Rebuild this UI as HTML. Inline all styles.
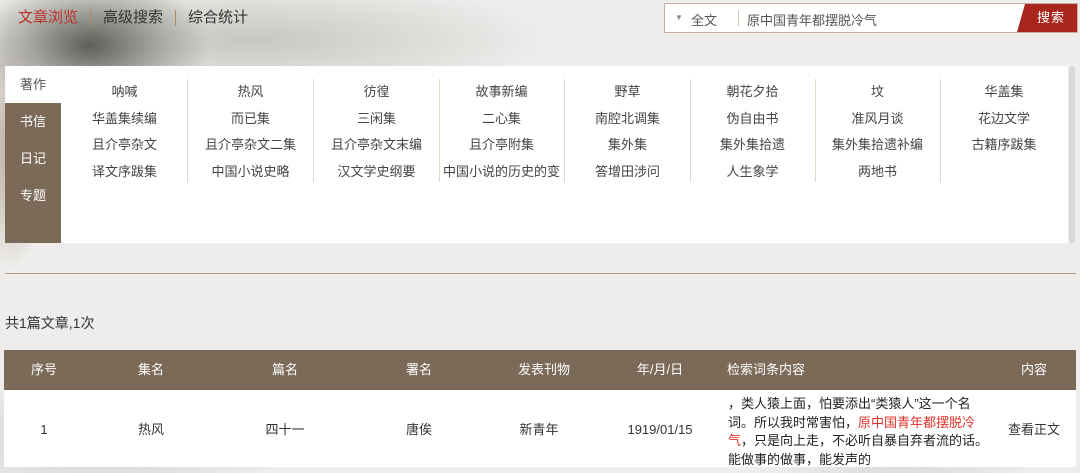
<!DOCTYPE html>
<html><head><meta charset="utf-8"><style>
*{margin:0;padding:0;box-sizing:border-box}
body{width:1080px;height:473px;overflow:hidden;font-family:"Liberation Sans","Noto Sans CJK SC",sans-serif;background:#eeedeb;position:relative;color:#333}
.bg{position:absolute;left:0;top:0;width:1080px;height:473px;background:
radial-gradient(ellipse 120px 70px at 90px 45px,rgba(60,65,55,.8),rgba(110,110,100,.4) 60%,transparent 100%),
radial-gradient(ellipse 300px 60px at 250px 40px,rgba(160,160,155,.5),transparent 100%),
radial-gradient(ellipse 40px 120px at 10px 150px,rgba(150,130,110,.6),transparent 100%),
radial-gradient(ellipse 200px 60px at 100px 440px,rgba(160,160,155,.4),transparent 100%),
radial-gradient(ellipse 140px 60px at 900px 450px,rgba(180,180,175,.4),transparent 100%)}
.nav{position:absolute;top:10px;left:18px;font-size:15px;display:flex}
.nav span{padding:0 12px;border-left:1px solid #b08a5a;line-height:16px}
.nav span:first-child{padding-left:0;border:none;color:#c0302a}
.search{position:absolute;left:664px;top:3px;width:414px;height:30px;border:1px solid #c9aea0;background:#fff;font-size:13px}
.search .tri{position:absolute;left:10px;top:9px;font-size:8px;color:#888}
.search .sel{position:absolute;left:26px;top:6px;color:#555}
.search .sep{position:absolute;left:73px;top:6px;height:16px;border-left:1px solid #d8c8b8}
.search .q{position:absolute;left:82px;top:6px;color:#555}
.search .btn{position:absolute;right:0;top:0;width:60px;height:28px;background:#a8261e;clip-path:polygon(8px 0,100% 0,100% 100%,0 100%);color:#fff;font-size:13px;text-align:center;line-height:28px;padding-left:8px;letter-spacing:1px}
.panel{position:absolute;left:5px;top:66px;width:1071px;height:177px;background:#fff}
.tabs{position:absolute;left:0;top:0;width:56px;height:177px;background:#7b6a58}
.tabs div{height:37px;line-height:37px;text-align:center;color:#fff;font-size:13px}
.tabs div.on{background:#fff;color:#555}
.col{position:absolute;top:13px;width:126px;height:103px;text-align:center;font-size:13px;color:#444;line-height:26.7px}
.col.d{border-right:1px solid #e2d8cc}
.scroll{position:absolute;right:0;top:0;width:8px;height:177px;background:#ececec}
.scroll i{position:absolute;left:1px;top:0;width:6px;height:177px;background:#d8d8d8;border-radius:3px}
.hr{position:absolute;left:5px;top:273px;width:1071px;border-top:1px solid #b79a86}
.count{position:absolute;left:5px;top:313px;font-size:14px;color:#333}
.th{position:absolute;left:4px;top:350px;width:1072px;height:40px;background:#7b6a58;color:#fff;font-size:13px}
.tr{position:absolute;left:4px;top:390px;width:1072px;height:77px;background:#fff;font-size:13px;color:#333}
.c{position:absolute;top:0;transform:translateX(-50%);white-space:nowrap}
.th .c{line-height:40px}
.tr .c{line-height:80px}
.l{position:absolute;top:0;white-space:nowrap;line-height:40px}
.txt{position:absolute;left:728px;top:395px;font-size:13px;line-height:18.5px;color:#222;white-space:nowrap}
.red{color:#e0302a}
</style></head><body>
<div class="bg"></div>
<div class="nav"><span>文章浏览</span><span>高级搜索</span><span>综合统计</span></div>
<div class="search"><span class="tri">▼</span><span class="sel">全文</span><span class="sep"></span><span class="q">原中国青年都摆脱冷气</span><div class="btn">搜索</div></div>
<div class="panel">
<div class="tabs"><div class="on">著作</div><div>书信</div><div>日记</div><div>专题</div></div>
<div class="col d" style="left:57px">呐喊<br>华盖集续编<br>且介亭杂文<br>译文序跋集</div>
<div class="col d" style="left:183px">热风<br>而已集<br>且介亭杂文二集<br>中国小说史略</div>
<div class="col d" style="left:309px">彷徨<br>三闲集<br>且介亭杂文末编<br>汉文学史纲要</div>
<div class="col d" style="left:434px">故事新编<br>二心集<br>且介亭附集<br>中国小说的历史的变</div>
<div class="col d" style="left:560px">野草<br>南腔北调集<br>集外集<br>答增田涉问</div>
<div class="col d" style="left:685px">朝花夕拾<br>伪自由书<br>集外集拾遗<br>人生象学</div>
<div class="col d" style="left:810px">坟<br>准风月谈<br>集外集拾遗补编<br>两地书</div>
<div class="col" style="left:936px">华盖集<br>花边文学<br>古籍序跋集</div>
<div class="scroll"><i></i></div>
</div>
<div class="hr"></div>
<div class="count">共1篇文章,1次</div>
<div class="th">
<span class="c" style="left:40px">序号</span><span class="c" style="left:147px">集名</span><span class="c" style="left:281px">篇名</span><span class="c" style="left:415px">署名</span><span class="c" style="left:540px">发表刊物</span><span class="c" style="left:656px">年/月/日</span><span class="l" style="left:723px">检索词条内容</span><span class="c" style="left:1030px">内容</span>
</div>
<div class="tr">
<span class="c" style="left:40px">1</span><span class="c" style="left:147px">热风</span><span class="c" style="left:281px">四十一</span><span class="c" style="left:415px">唐俟</span><span class="c" style="left:535px">新青年</span><span class="c" style="left:656px">1919/01/15</span><span class="c" style="left:1030px">查看正文</span>
</div>
<div class="txt">，类人猿上面，怕要添出“类猿人”这一个名<br>词。所以我时常害怕，<span class="red">原中国青年都摆脱冷</span><br><span class="red">气</span>，只是向上走，不必听自暴自弃者流的话。<br>能做事的做事，能发声的</div>
</body></html>
